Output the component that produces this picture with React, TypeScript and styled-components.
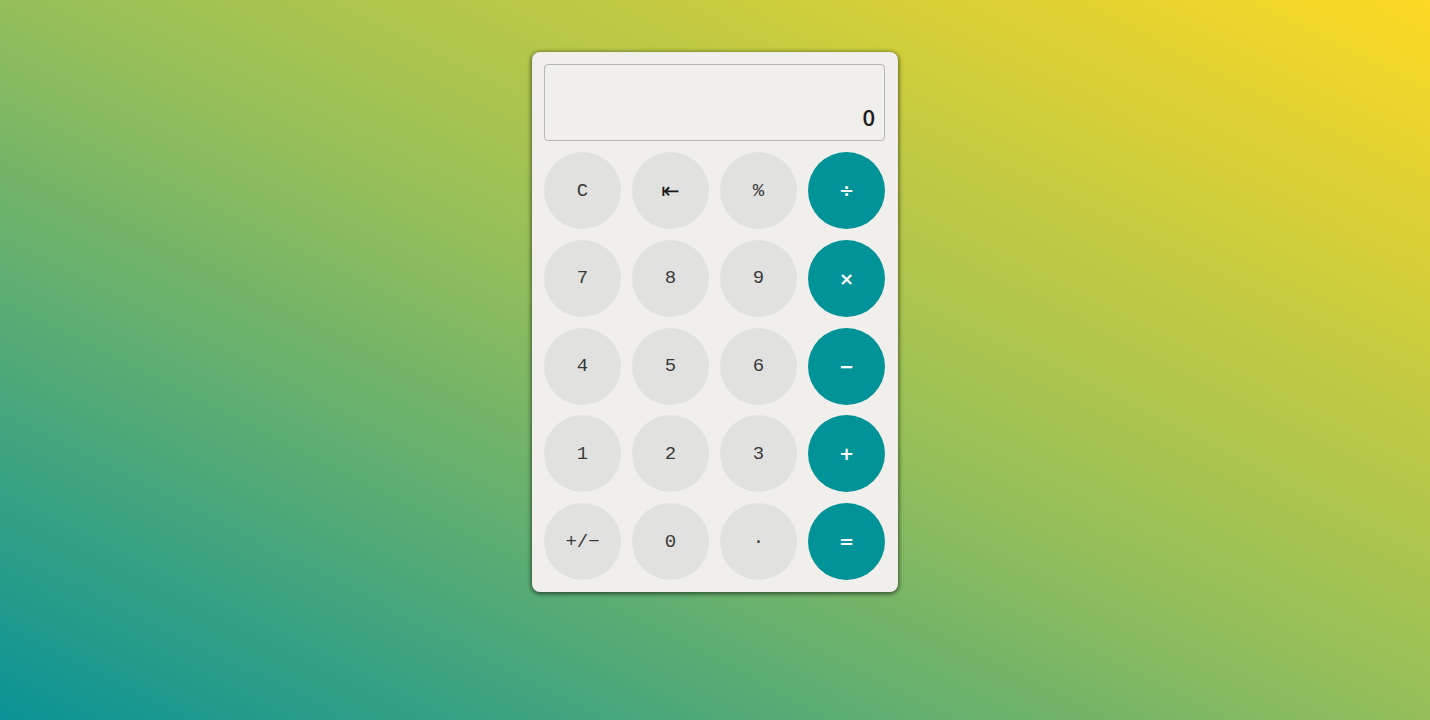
import React from "react";
import styled, { createGlobalStyle } from "styled-components";

const GlobalStyle = createGlobalStyle`
  html, body { margin: 0; padding: 0; }
  body {
    min-height: 720px;
    background: linear-gradient(to top right, #0a9396 0%, #94bf5a 50%, #fdd924 100%);
    font-family: "DejaVu Sans", sans-serif;
  }
`;

const Page = styled.div`
  display: flex;
  justify-content: center;
  padding-top: 52px;
  min-height: 720px;
  box-sizing: border-box;
`;

const Card = styled.div`
  width: 366px;
  box-sizing: border-box;
  padding: 12px 13px 12px 12px;
  background: #f0efeb;
  border-radius: 8px;
  box-shadow: 0 1px 4px 1px rgba(0, 0, 0, 0.55);
  align-self: flex-start;
`;

const Display = styled.div`
  height: 77px;
  box-sizing: border-box;
  border: 1px solid #b5b5b2;
  border-radius: 4px;
  display: flex;
  align-items: flex-end;
  justify-content: flex-end;
  padding: 0 9px 12px;
  font-family: "Open Sans", sans-serif;
  font-weight: 600;
  font-size: 22px;
  line-height: 1;
  color: #1c1c1c;
  margin-bottom: 11px;
`;

const Grid = styled.div`
  display: grid;
  grid-template-columns: repeat(4, 77px);
  grid-auto-rows: 77px;
  column-gap: 11px;
  row-gap: 10.75px;
`;

const Key = styled.button<{ $op?: boolean; $arrow?: boolean }>`
  width: 77px;
  height: 77px;
  border: none;
  border-radius: 50%;
  padding: 0;
  display: flex;
  align-items: center;
  justify-content: center;
  background: ${(p) => (p.$op ? "#019397" : "#e1e2df")};
  color: ${(p) => (p.$op ? "#ffffff" : p.$arrow ? "#1a1a1a" : "#3a3a3a")};
  font-family: ${(p) =>
    p.$op || p.$arrow ? '"DejaVu Sans", sans-serif' : '"Liberation Mono", monospace'};
  font-size: ${(p) => (p.$op ? "18px" : p.$arrow ? "22px" : "19px")};
  font-weight: ${(p) => (p.$op ? 700 : 400)};
  cursor: pointer;
`;

const keys: { label: string; op?: boolean; arrow?: boolean }[] = [
  { label: "C" },
  { label: "⇤", arrow: true },
  { label: "%" },
  { label: "÷", op: true },
  { label: "7" },
  { label: "8" },
  { label: "9" },
  { label: "×", op: true },
  { label: "4" },
  { label: "5" },
  { label: "6" },
  { label: "−", op: true },
  { label: "1" },
  { label: "2" },
  { label: "3" },
  { label: "+", op: true },
  { label: "+/−" },
  { label: "0" },
  { label: "·" },
  { label: "=", op: true },
];

export default function App() {
  return (
    <>
      <GlobalStyle />
      <Page>
        <Card>
          <Display>0</Display>
          <Grid>
            {keys.map((k, i) => (
              <Key key={i} $op={k.op} $arrow={k.arrow}>
                {k.label}
              </Key>
            ))}
          </Grid>
        </Card>
      </Page>
    </>
  );
}
